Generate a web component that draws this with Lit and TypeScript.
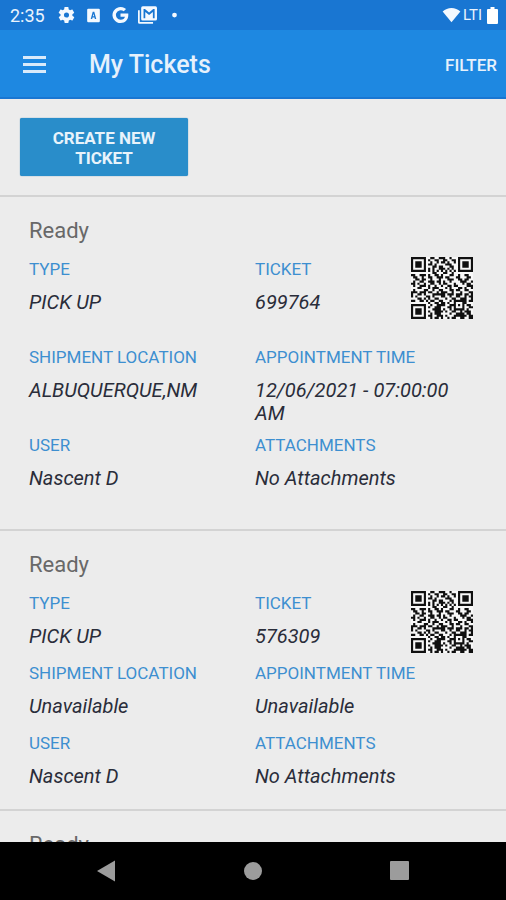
import { LitElement, html, css, svg, nothing } from "lit";
import { customElement, property } from "lit/decorators.js";

interface Ticket {
  status: string;
  type: string;
  number: string;
  location: string;
  appointment: string;
  user: string;
  attachments: string;
}

const TICKETS: Ticket[] = [
  {
    status: "Ready",
    type: "PICK UP",
    number: "699764",
    location: "ALBUQUERQUE,NM",
    appointment: "12/06/2021 - 07:00:00 AM",
    user: "Nascent D",
    attachments: "No Attachments",
  },
  {
    status: "Ready",
    type: "PICK UP",
    number: "576309",
    location: "Unavailable",
    appointment: "Unavailable",
    user: "Nascent D",
    attachments: "No Attachments",
  },
  {
    status: "Ready",
    type: "PICK UP",
    number: "576310",
    location: "Unavailable",
    appointment: "Unavailable",
    user: "Nascent D",
    attachments: "No Attachments",
  },
];

const QR_ROWS = [
  "#######..##..###..#...#######",
  "#.....#.#..##..##..##.#.....#",
  "#.###.#..#..#.##.#..#.#.###.#",
  "#.###.#.##.#....###...#.###.#",
  "#.###.#...##.##...##..#.###.#",
  "#.....#.#.#..###.#.#..#.....#",
  "#######.#.#.#.#.#.#.#.#######",
  "..........##...##..#.........",
  "##..###.#..##.#...##..#..##..",
  ".##..#..##..###.##...##...##.",
  "..##.##..#...#...###..##.##..",
  ".#..##..###.##.#..#....###..#",
  "##.#..#..##..#.##...#...#.##.",
  ".#..###.#..#..#..##.##....###",
  "...##...#.###...#.#...##.#..#",
  ".#....##..#..##...##.##..##..",
  "###.###.##..#.###..#...#...##",
  "#..##.#...######.###.###.##.#",
  "#.#....##.#...##..#..##..#.##",
  "...##.#.#..##...#..##..###..#",
  "##..##.#.##..##...#.######.##",
  "........#..##.##.#..#...##...",
  "#######..#..####..###.#.#.##.",
  "#.....#.#..###...##.#...#..##",
  "#.###.#...####.#..#.#####.#..",
  "#.###.#.#..####.#..##..#.###.",
  "#.###.#..#.###....#..####.##.",
  "#.....#.##..###.#...######.##",
  "#######..#.##.#..#.##..##..##",
];

const QR_PATH = QR_ROWS.map((row, y) =>
  [...row].map((cell, x) => (cell === "#" ? `M${x} ${y}h1v1h-1z` : "")).join("")
).join("");

const qrCode = (label: string) => html`
  <svg class="qr" viewBox="0 0 29 29" role="img" aria-label=${label}>
    <rect width="29" height="29" fill="#f8f8f8"></rect>
    ${svg`<path d=${QR_PATH} fill="#101010"></path>`}
  </svg>
`;

@customElement("status-bar")
class StatusBar extends LitElement {
  static styles = css`
    :host {
      display: flex;
      align-items: center;
      justify-content: space-between;
      height: 30px;
      padding: 0 8px 0 10px;
      background: #1976d2;
      color: #eaf3fd;
    }
    .side {
      display: flex;
      align-items: center;
    }
    .time {
      width: 47px;
      font-size: 18px;
    }
    .icons {
      display: flex;
      align-items: center;
      gap: 8px;
    }
    .icon {
      width: 19px;
      height: 20px;
      fill: #f4f9ff;
    }
    .network {
      margin: 0 5px 0 2px;
      font-size: 15px;
    }
    .battery {
      width: 11px;
      height: 17px;
      fill: #fff;
    }
  `;

  render() {
    return html`
      <div class="side">
        <span class="time">2:35</span>
        <span class="icons">
          <svg class="icon" viewBox="0 0 24 24" aria-hidden="true">
            <path
              d="M19.4 13c0-.3.1-.6.1-1s0-.7-.1-1l2.1-1.6c.2-.1.2-.4.1-.6l-2-3.5c-.1-.2-.4-.3-.6-.2l-2.5 1c-.5-.4-1.1-.7-1.7-1l-.4-2.6c0-.3-.2-.5-.5-.5h-4c-.3 0-.5.2-.5.4l-.4 2.7c-.6.2-1.1.6-1.7 1l-2.5-1c-.2-.1-.5 0-.6.2l-2 3.5c-.1.2-.1.5.1.6L4.5 11c0 .3-.1.7-.1 1s0 .7.1 1l-2.1 1.6c-.2.1-.2.4-.1.6l2 3.5c.1.2.4.3.6.2l2.5-1c.5.4 1.1.7 1.7 1l.4 2.6c0 .3.2.5.5.5h4c.3 0 .5-.2.5-.4l.4-2.7c.6-.2 1.1-.6 1.7-1l2.5 1c.2.1.5 0 .6-.2l2-3.500c.1-.2.1-.5-.1-.6L19.4 13zM12 15.200a3.200 3.200 0 1 1 0-6.400 3.200 3.200 0 0 1 0 6.400z"
            ></path>
          </svg>
          <svg class="icon" viewBox="0 0 24 24" aria-hidden="true">
            <path
              fill-rule="evenodd"
              d="M5.500 4h13A1.500 1.500 0 0 1 20 5.500v14a1.500 1.500 0 0 1-1.500 1.500h-13A1.500 1.500 0 0 1 4 19.500v-14A1.500 1.500 0 0 1 5.500 4zM11 8L8.500 17h1.800l.5-2h2.400l.5 2h1.800L13 8zM12 10.500l.8 3h-1.600z"
            ></path>
          </svg>
          <svg class="icon" viewBox="0 0 24 24" aria-hidden="true">
            <path
              d="M12 10.200v3.900h5.600c-.5 2.300-2.500 3.900-5.400 3.900a6 6 0 1 1 3.900-10.600L19 4.500A10.200 10.200 0 1 0 12.200 22.200c6.300 0 10.300-4.600 9.600-12z"
            ></path>
          </svg>
          <svg class="icon" viewBox="0 0 24 24" aria-hidden="true">
            <path
              d="M0 6h2.200v14.800H19V23H2a2 2 0 0 1-2-2zM6 1h16a2 2 0 0 1 2 2v14a2 2 0 0 1-2 2H6a2 2 0 0 1-2-2V3a2 2 0 0 1 2-2zM7 4.500V16h2.200V8.200L14 12l4.800-3.800V16H21V4.500h-1.800L14 8.700 8.800 4.500z"
              fill-rule="evenodd"
            ></path>
          </svg>
          <svg class="icon" viewBox="0 0 24 24" aria-hidden="true">
            <circle cx="12" cy="12" r="3"></circle>
          </svg>
        </span>
      </div>
      <div class="side">
        <svg class="icon" viewBox="0 0 24 24" aria-hidden="true">
          <path d="M12 21L.8 7.500C4 4.800 7.800 3.200 12 3.200s8 1.600 11.200 4.300z"></path>
        </svg>
        <span class="network">LTI</span>
        <svg class="battery" viewBox="0 0 11 17" aria-hidden="true">
          <path d="M3.500 0h4v2H10a1 1 0 0 1 1 1v13a1 1 0 0 1-1 1H1a1 1 0 0 1-1-1V3a1 1 0 0 1 1-1h2.500z"></path>
        </svg>
      </div>
    `;
  }
}

@customElement("ticket-card")
class TicketCard extends LitElement {
  @property({ attribute: false }) ticket!: Ticket;

  static styles = css`
    :host {
      display: block;
      padding: 20px 25px 8px 29px;
      border-top: 2px solid #d3d3d3;
    }
    .status {
      margin: 0 0 12px;
      font-size: 22px;
      font-weight: 400;
      line-height: 28px;
      color: #686868;
    }
    .fields {
      display: grid;
      grid-template-columns: 1fr 1fr;
      grid-auto-rows: 1fr;
      margin: 0;
    }
    .field {
      display: flex;
      justify-content: space-between;
      padding: 0 8px 8px 0;
    }
    .label {
      font-size: 17px;
      line-height: 24px;
      color: #3d8fd0;
    }
    .value {
      margin: 10px 0 0;
      font-size: 20px;
      font-style: italic;
      line-height: 23px;
      color: #2a2d3a;
    }
    .qr {
      display: block;
      width: 62px;
      height: 62px;
    }
  `;

  private field(label: string, value: string, qr = false) {
    return html`
      <div class="field">
        <div>
          <dt class="label">${label}</dt>
          <dd class="value">${value}</dd>
        </div>
        ${qr ? qrCode(`QR code for ticket ${value}`) : nothing}
      </div>
    `;
  }

  render() {
    const t = this.ticket;
    return html`
      <h2 class="status">${t.status}</h2>
      <dl class="fields">
        ${this.field("TYPE", t.type)} ${this.field("TICKET", t.number, true)}
        ${this.field("SHIPMENT LOCATION", t.location)}
        ${this.field("APPOINTMENT TIME", t.appointment)}
        ${this.field("USER", t.user)} ${this.field("ATTACHMENTS", t.attachments)}
      </dl>
    `;
  }
}

@customElement("app-root")
class AppRoot extends LitElement {
  static styles = css`
    :host {
      display: flex;
      flex-direction: column;
      height: 100vh;
      background: #ececec;
      font-family: Roboto, "Liberation Sans", sans-serif;
    }
    button {
      border: 0;
      font-family: inherit;
      cursor: pointer;
    }
    .appbar {
      display: flex;
      align-items: center;
      flex: none;
      box-sizing: border-box;
      height: 69px;
      padding: 3px 9px 0 23px;
      border-bottom: 2px solid #1976d2;
      background: #1e88e1;
      color: #e6f1fc;
    }
    .menu {
      display: flex;
      padding: 0;
      background: none;
    }
    .menu-icon {
      width: 23px;
      height: 18px;
    }
    .title {
      flex: 1;
      margin: 0 0 0 43px;
      font-size: 25px;
      font-weight: 500;
      line-height: 32px;
    }
    .filter {
      padding: 0;
      background: none;
      color: inherit;
      font-size: 17px;
      font-weight: 500;
    }
    .content {
      flex: 1;
      min-height: 0;
      overflow-y: auto;
      scrollbar-width: none;
    }
    .actions {
      padding: 19px 20px;
    }
    .create {
      display: block;
      width: 168px;
      padding: 10px 24px 8px;
      border-radius: 2px;
      background: #298dca;
      box-shadow: 0 0 1px #1a6fa8;
      color: #e8f3fb;
      font-size: 17px;
      font-weight: 700;
      line-height: 20px;
    }
    .navbar {
      display: grid;
      grid-template-columns: repeat(3, 1fr);
      flex: none;
      height: 58px;
      padding: 0 33px;
      background: #000;
    }
    .nav {
      display: flex;
      align-items: center;
      justify-content: center;
      padding: 0;
      background: none;
    }
    .nav-icon {
      width: 22px;
      height: 22px;
      fill: #9c9c9c;
    }
  `;

  render() {
    return html`
      <status-bar></status-bar>
      <header class="appbar">
        <button class="menu" aria-label="Open menu">
          <svg class="menu-icon" viewBox="0 0 23 18" fill="#d9eafa">
            <path d="M0 0h23v3H0zM0 7h23v3H0zM0 14h23v3H0z"></path>
          </svg>
        </button>
        <h1 class="title">My Tickets</h1>
        <button class="filter">FILTER</button>
      </header>
      <main class="content">
        <div class="actions">
          <button class="create">CREATE NEW TICKET</button>
        </div>
        ${TICKETS.map((t) => html`<ticket-card .ticket=${t}></ticket-card>`)}
      </main>
      <nav class="navbar">
        <button class="nav" aria-label="Back">
          <svg class="nav-icon" viewBox="0 0 22 22">
            <path d="M20 .5v21L2 11z"></path>
          </svg>
        </button>
        <button class="nav" aria-label="Home">
          <svg class="nav-icon" viewBox="0 0 22 22"><circle cx="11" cy="11" r="9"></circle></svg>
        </button>
        <button class="nav" aria-label="Recent apps">
          <svg class="nav-icon" viewBox="0 0 22 22">
            <rect x="1" y="1" width="19" height="19" rx="1"></rect>
          </svg>
        </button>
      </nav>
    `;
  }
}
